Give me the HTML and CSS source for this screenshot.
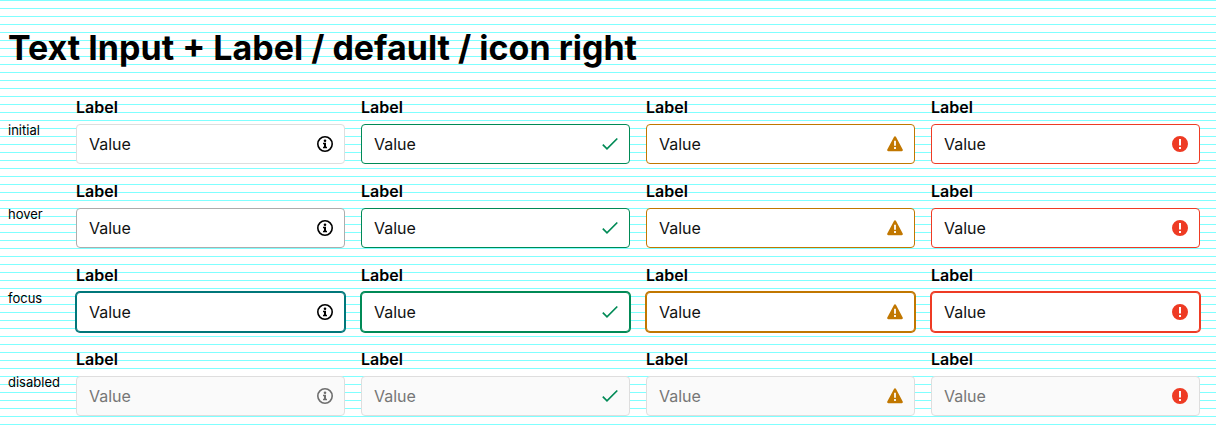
FILE: index.html
```html
<!DOCTYPE html>
<html lang="en">
<head>
<meta charset="utf-8">
<title>Text Input + Label</title>
<link rel="stylesheet" href="styles.css">
</head>
<body>
<svg class="sprite" aria-hidden="true">
  <symbol id="info" viewBox="0 0 16 16"><circle cx="8" cy="8" r="7.2" fill="none" stroke="currentColor" stroke-width="1.6"/><circle cx="8" cy="4.700" r="1.300" fill="currentColor"/><path d="M6 6.800h3v4h1v1.400H6v-1.400h1V8.200H6z" fill="currentColor"/></symbol>
  <symbol id="check" viewBox="0 0 16 16"><path d="M.8 8.600l4.200 4.200L15.300 2.500" fill="none" stroke="currentColor" stroke-width="1.700"/></symbol>
  <symbol id="warn" viewBox="0 0 16 16"><path fill-rule="evenodd" d="M7.100.8a1 1 0 0 1 1.800 0l6.800 12.600c.4.9 0 1.800-1 1.800H1.300c-1 0-1.400-.9-1-1.800zM7.100 4.700v5h1.800v-5zM7.100 11v2h1.800v-2z" fill="currentColor"/></symbol>
  <symbol id="error" viewBox="0 0 16 16"><path fill-rule="evenodd" d="M8 0a8 8 0 1 0 0 16A8 8 0 0 0 8 0zM7 3v6.500h2V3zM7 11v2h2v-2z" fill="currentColor"/></symbol>
</svg>
<main>
  <h1 class="title">Text Input + Label / default / icon right</h1>
  <div class="states">
    <div class="state">
      <span class="state-name">initial</span>
      <div class="field"><label for="i1">Label</label><div class="box"><input id="i1" value="Value"><svg class="icon"><use href="#info"/></svg></div></div>
      <div class="field success"><label for="i2">Label</label><div class="box"><input id="i2" value="Value"><svg class="icon"><use href="#check"/></svg></div></div>
      <div class="field warning"><label for="i3">Label</label><div class="box"><input id="i3" value="Value"><svg class="icon"><use href="#warn"/></svg></div></div>
      <div class="field error"><label for="i4">Label</label><div class="box"><input id="i4" value="Value"><svg class="icon"><use href="#error"/></svg></div></div>
    </div>
    <div class="state hover">
      <span class="state-name">hover</span>
      <div class="field"><label for="h1">Label</label><div class="box"><input id="h1" value="Value"><svg class="icon"><use href="#info"/></svg></div></div>
      <div class="field success"><label for="h2">Label</label><div class="box"><input id="h2" value="Value"><svg class="icon"><use href="#check"/></svg></div></div>
      <div class="field warning"><label for="h3">Label</label><div class="box"><input id="h3" value="Value"><svg class="icon"><use href="#warn"/></svg></div></div>
      <div class="field error"><label for="h4">Label</label><div class="box"><input id="h4" value="Value"><svg class="icon"><use href="#error"/></svg></div></div>
    </div>
    <div class="state focus">
      <span class="state-name">focus</span>
      <div class="field"><label for="f1">Label</label><div class="box"><input id="f1" value="Value"><svg class="icon"><use href="#info"/></svg></div></div>
      <div class="field success"><label for="f2">Label</label><div class="box"><input id="f2" value="Value"><svg class="icon"><use href="#check"/></svg></div></div>
      <div class="field warning"><label for="f3">Label</label><div class="box"><input id="f3" value="Value"><svg class="icon"><use href="#warn"/></svg></div></div>
      <div class="field error"><label for="f4">Label</label><div class="box"><input id="f4" value="Value"><svg class="icon"><use href="#error"/></svg></div></div>
    </div>
    <div class="state disabled">
      <span class="state-name">disabled</span>
      <div class="field"><label for="d1">Label</label><div class="box"><input id="d1" value="Value" disabled><svg class="icon"><use href="#info"/></svg></div></div>
      <div class="field success"><label for="d2">Label</label><div class="box"><input id="d2" value="Value" disabled><svg class="icon"><use href="#check"/></svg></div></div>
      <div class="field warning"><label for="d3">Label</label><div class="box"><input id="d3" value="Value" disabled><svg class="icon"><use href="#warn"/></svg></div></div>
      <div class="field error"><label for="d4">Label</label><div class="box"><input id="d4" value="Value" disabled><svg class="icon"><use href="#error"/></svg></div></div>
    </div>
  </div>
</main>
</body>
</html>
```
FILE: styles.css
```css
* {
  box-sizing: border-box;
}

body {
  margin: 0;
  color: #000;
  font-family: Inter, "Liberation Sans", sans-serif;
  background: #fff repeating-linear-gradient(to bottom, #80ffff 0 1px, #fff 1px 8px);
}

main {
  padding: 28px 16px 16px 8px;
}

.sprite {
  display: none;
}

.title {
  margin: 0 0 28px;
  font-size: 34px;
  line-height: 40px;
  font-weight: 700;
}

.states {
  display: grid;
  gap: 16px;
}

.state {
  --border: #dedede;
  display: grid;
  grid-template-columns: 52px repeat(4, minmax(0, 1fr));
  gap: 16px;
  align-items: center;
}

.state-name {
  font-size: 13px;
  line-height: 20px;
  white-space: nowrap;
}

.field {
  display: grid;
  grid-template-columns: minmax(0, 1fr);
  gap: 6px;
}

.field label {
  font-size: 16px;
  line-height: 22px;
  font-weight: 600;
}

.box {
  display: flex;
  align-items: center;
  height: 40px;
  padding: 0 11px 0 12px;
  border: 1px solid var(--border);
  border-radius: 4px;
  background: #fff;
}

.box input {
  flex: 1;
  min-width: 0;
  padding: 0;
  border: 0;
  outline: 0;
  background: transparent;
  color: #111;
  font: 16px/24px Inter, "Liberation Sans", sans-serif;
}

.icon {
  flex: none;
  width: 16px;
  height: 16px;
}

.success {
  --border: #008a56;
}

.warning {
  --border: #c17700;
}

.error {
  --border: #ee3b24;
}

.success .icon {
  color: #008a56;
}

.warning .icon {
  color: #c17700;
}

.error .icon {
  color: #ee3b24;
}

.hover {
  --border: #adadad;
}

.focus {
  --border: #00777a;
}

.focus .box {
  box-shadow: 0 0 0 1px var(--border);
}

.disabled .box {
  border-color: #dedede;
  background: #fafafa;
  color: #6f6f6f;
}

.disabled .box input {
  color: #767676;
}
```
